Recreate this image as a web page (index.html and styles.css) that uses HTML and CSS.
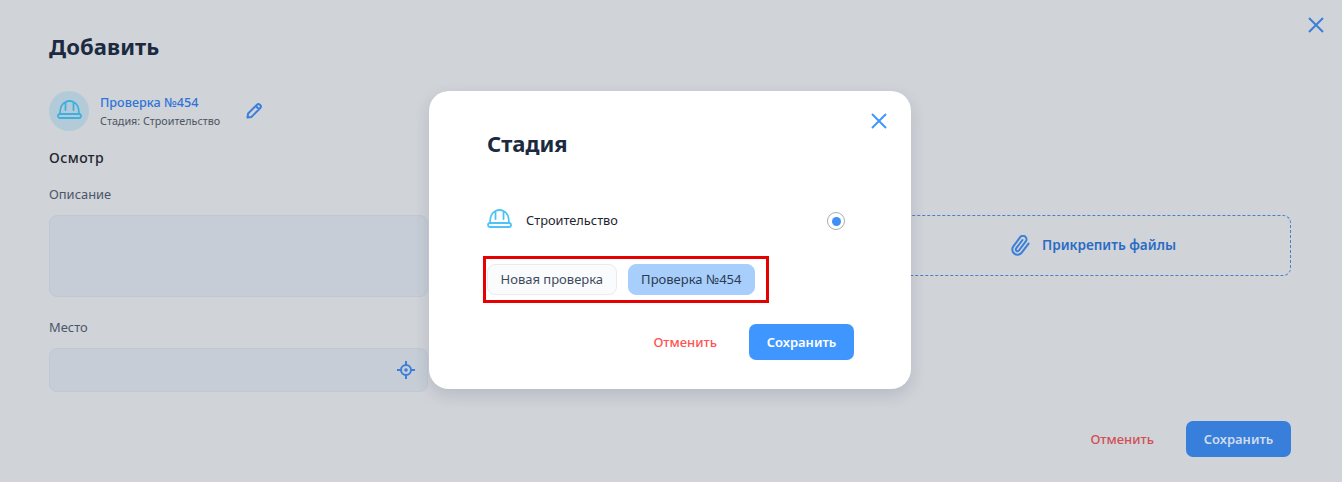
FILE: index.html
```html
<!DOCTYPE html>
<html lang="ru">
<head>
<meta charset="utf-8">
<title>Добавить</title>
<link rel="stylesheet" href="styles.css">
</head>
<body>
<main class="page">
  <button class="icon-btn page-close" aria-label="Закрыть">
    <svg width="18" height="18" viewBox="0 0 18 18"><path d="M2 2l14 14M16 2L2 16" fill="none" stroke="#3b7fd9" stroke-width="2"/></svg>
  </button>
  <h1 class="page-title">Добавить</h1>
  <div class="stage-row">
    <div class="stage-avatar">
      <svg class="helmet" width="25" height="19" viewBox="0 0 25 19"><g fill="none" stroke="#3fb0de" stroke-width="1.800" stroke-linecap="round" stroke-linejoin="round"><rect x="1" y="14" width="23" height="4" rx="2"/><path d="M3 14C3 8 5 3.500 8.500 2M22 14C22 8 20 3.500 16.500 2M8.500 10V2Q12.500 0 16.500 2V10"/></g></svg>
    </div>
    <div class="stage-text">
      <a class="stage-link">Проверка №454</a>
      <span class="stage-sub">Стадия: Строительство</span>
    </div>
    <svg class="stage-edit" width="18" height="18" viewBox="0 0 18 18"><path d="M2.500 15.500l.6-4L12 2.700a2 2 0 0 1 2.800 0l.5.500a2 2 0 0 1 0 2.800L6.500 14.900zM10.800 4l3.200 3.200" fill="none" stroke="#3b7fd9" stroke-width="2" stroke-linejoin="round"/></svg>
  </div>
  <h2 class="section-title">Осмотр</h2>
  <div class="columns">
    <div class="col-left">
      <label class="field-label">Описание</label>
      <div class="field field-area"></div>
      <label class="field-label field-label-place">Место</label>
      <div class="field field-place">
        <svg width="18" height="18" viewBox="0 0 18 18"><g fill="none" stroke="#3b7fd9" stroke-width="2"><circle cx="9" cy="9" r="5"/><path d="M9 0v4M9 14v4M0 9h4M14 9h4"/></g><circle cx="9" cy="9" r="1.800" fill="#3b7fd9"/></svg>
      </div>
    </div>
    <div class="col-right">
      <div class="dropzone">
        <svg width="21" height="21" viewBox="0 0 24 24"><path d="M21.440 11.050l-9.190 9.190a6 6 0 0 1-8.490-8.490l9.190-9.190a4 4 0 0 1 5.660 5.660l-9.200 9.190a2 2 0 0 1-2.830-2.830l8.490-8.480" transform="rotate(-8 12 12)" fill="none" stroke="#3b7fd9" stroke-width="2.300" stroke-linecap="round" stroke-linejoin="round"/></svg>
        <span class="dropzone-text">Прикрепить файлы</span>
      </div>
    </div>
  </div>
  <div class="page-actions">
    <button class="btn-cancel btn-cancel-dim">Отменить</button>
    <button class="btn-save btn-save-dim">Сохранить</button>
  </div>
</main>

<section class="modal">
  <button class="icon-btn modal-close" aria-label="Закрыть">
    <svg width="18" height="18" viewBox="0 0 18 18"><path d="M2 2l14 14M16 2L2 16" fill="none" stroke="#4096ff" stroke-width="2"/></svg>
  </button>
  <h2 class="modal-title">Стадия</h2>
  <div class="stage-option">
    <svg class="helmet" width="25" height="19" viewBox="0 0 25 19"><g fill="none" stroke="#4fc3f7" stroke-width="1.800" stroke-linecap="round" stroke-linejoin="round"><rect x="1" y="14" width="23" height="4" rx="2"/><path d="M3 14C3 8 5 3.500 8.500 2M22 14C22 8 20 3.500 16.500 2M8.500 10V2Q12.500 0 16.500 2V10"/></g></svg>
    <span class="stage-option-name">Строительство</span>
    <span class="radio"><span class="radio-dot"></span></span>
  </div>
  <div class="chips">
    <button class="chip">Новая проверка</button>
    <button class="chip chip-active">Проверка №454</button>
  </div>
  <div class="modal-actions">
    <button class="btn-cancel">Отменить</button>
    <button class="btn-save">Сохранить</button>
  </div>
</section>
</body>
</html>
```
FILE: styles.css
```css
* { box-sizing: border-box; }
html, body { margin: 0; height: 100%; }
body {
  background: #d0d3d8;
  font-family: "Noto Sans", sans-serif;
  color: #1a2a40;
  overflow: hidden;
}
button { font-family: inherit; border: 0; background: none; padding: 0; cursor: pointer; }
h1, h2 { margin: 0; }
.page { padding: 31px 51px 0 49px; height: 482px; }
.icon-btn { position: absolute; display: block; width: 18px; height: 18px; }
.icon-btn svg { display: block; }
.page-close { top: 16px; left: 1307px; }
.page-title { font-size: 22px; line-height: 30px; font-weight: 700; color: #1b2a41; letter-spacing: .1px; }
.stage-row { display: flex; align-items: center; margin-top: 30px; height: 40px; }
.stage-avatar {
  width: 40px; height: 40px; border-radius: 50%; background: #b3cbd9;
  display: flex; align-items: center; justify-content: center;
}
.helmet { display: block; }
.stage-avatar .helmet { margin-bottom: 3px; }
.stage-text { display: flex; flex-direction: column; margin-left: 11px; width: 145px; }
.stage-link { font-size: 12.600px; line-height: 16px; font-weight: 500; color: #2f74d8; }
.stage-sub { font-size: 10.750px; line-height: 14px; margin-top: 3px; color: #4c5563; white-space: nowrap; }
.section-title { font-size: 14px; line-height: 20px; font-weight: 500; color: #1f2530; margin-top: 17px; letter-spacing: .45px; }
.columns { display: grid; grid-template-columns: 379px 1fr; column-gap: 41px; }
.field-label { display: block; font-size: 12.900px; line-height: 18px; color: #4b5668; margin-top: 17px; }
.field { background: #c6cdd6; border: 1px solid #c1c8d2; border-radius: 8px; }
.field-area { height: 82px; margin-top: 12px; }
.field-label-place { margin-top: 21px; }
.field-place { height: 44px; margin-top: 12px; display: flex; align-items: center; justify-content: flex-end; padding-right: 12px; }
.col-right { padding-top: 47px; }
.dropzone {
  height: 61px; border: 1px dashed #4a80c8; border-radius: 8px;
  display: flex; align-items: center; justify-content: center; gap: 11px;
  padding-left: 426px;
  font-size: 13.600px; font-weight: 600; color: #2a6cc4;
}
.dropzone svg { display: block; }
.dropzone-text { margin-bottom: 3px; }
.page-actions { display: flex; justify-content: flex-end; align-items: center; gap: 32px; margin-top: 29px; }
.btn-cancel { font-size: 13px; font-weight: 500; color: #ff5252; }
.btn-cancel-dim { color: #d14e55; }
.btn-save {
  width: 105px; height: 36px; border-radius: 7px; background: #4096ff; color: #fff;
  font-size: 13px; font-weight: 600;
}
.btn-save-dim { background: #377fda; color: #cfdcee; }
.modal {
  position: absolute; left: 429px; top: 91px; width: 482px; height: 298px;
  background: #fff; border-radius: 20px;
  box-shadow: 0 6px 16px rgba(30, 45, 70, .14);
  padding: 37px 57px 0 58px;
}
.modal-close { top: 21px; left: 441px; }
.modal-title { font-size: 22px; line-height: 30px; font-weight: 700; color: #1b2a41; }
.stage-option { display: flex; align-items: center; margin-top: 51px; height: 24px; padding-right: 9px; }
.stage-option .helmet { margin-bottom: 5px; }
.stage-option-name { font-size: 12.800px; margin: 0 0 2px 14px; color: #1f2530; flex: 1; }
.radio {
  width: 18px; height: 18px; border-radius: 50%; border: 1px solid #a7aeb6;
  display: flex; align-items: center; justify-content: center; background: #fff;
}
.radio-dot { width: 9px; height: 9px; border-radius: 50%; background: #3f8ff7; }
.chips {
  display: flex; gap: 11px; width: 286px; height: 47px; margin: 23px 0 0 -4px;
  border: 3px solid #e60000; padding: 5px 0 0 1px;
}
.chip {
  height: 31px; padding: 0 12.500px 1px; border-radius: 8px; background: #fafbfd;
  border: 1px solid #e8ebf0; font-size: 13px; color: #3e4a5c;
}
.chip-active { background: #a8cffc; border-color: #a8cffc; color: #2b3a50; }
.modal-actions { display: flex; justify-content: flex-end; align-items: center; gap: 32px; margin-top: 21px; }
```
